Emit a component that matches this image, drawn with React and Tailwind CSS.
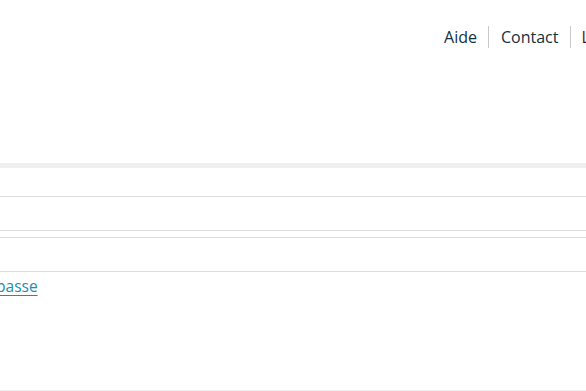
export default function App() {
  const font = { fontFamily: '"Open Sans", "DejaVu Sans", sans-serif' };

  return (
    <div className="w-[586px] h-[391px] overflow-hidden bg-white relative" style={font}>
      {/* Header with top links */}
      <header className="h-[163px] flex justify-end overflow-hidden">
        <nav className="flex items-start pt-[26px] -mr-[62px] text-[16px] leading-[22px]">
          <a className="pl-[12px] pr-[11px] text-[#15313c] border-r border-[#c8c8c8]">Aide</a>
          <a className="px-[12px] text-[#15313c] border-r border-[#c8c8c8]">Contact</a>
          <a className="pl-[10px] pr-[12px] text-[#5a1522]">Langue</a>
        </nav>
      </header>

      {/* Band */}
      <div className="h-[5px] bg-[#efefef]" />

      {/* Form rows */}
      <div className="h-[29px] border-b border-[#dcdcdc]" />
      <div className="h-[34px] border-b border-[#dcdcdc]" />
      <div className="h-[7px] border-b border-[#dcdcdc]" />
      <div className="h-[34px] border-b border-[#dcdcdc]" />

      <div className="pt-[4px] -ml-[59px] text-[15.5px] leading-[20px]">
        <a className="text-[#1a8db0] underline underline-offset-[3px]">Mot de passe</a>
      </div>

      <div className="absolute left-0 right-0 bottom-0 h-px bg-[#ececec]" />
    </div>
  );
}
